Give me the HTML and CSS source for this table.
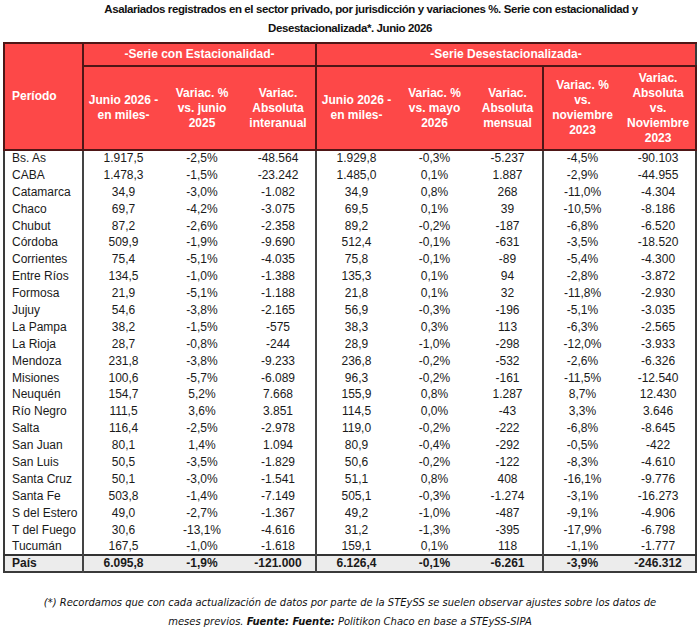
FILE: index.html
```html
<!DOCTYPE html>
<html lang="es">
<head>
  <meta charset="UTF-8">
  <meta name="viewport" content="width=device-width, initial-scale=1.0">
  <title>Asalariados registrados - Junio 2026</title>
  <link rel="stylesheet" href="styles.css">
</head>
<body>

  <!-- Titulo -->
  <div class="title">Asalariados registrados en el sector privado, por jurisdicción y variaciones %. Serie con estacionalidad y<br>Desestacionalizada*. Junio 2026</div>

  <table class="data">
    <colgroup>
      <col class="c-name">
      <col class="c-80"><col class="c-78"><col class="c-75">
      <col class="c-80"><col class="c-77"><col class="c-70">
      <col class="c-78"><col class="c-75">
    </colgroup>
    <thead>
      <tr class="group-row">
        <th rowspan="2" class="period">Período</th>
        <th colspan="3" class="split">-Serie con Estacionalidad-</th>
        <th colspan="5">-Serie Desestacionalizada-</th>
      </tr>
      <tr class="head-row">
        <th>Junio 2026 -<br>en miles-</th>
        <th>Variac. %<br>vs. junio<br>2025</th>
        <th class="split">Variac.<br>Absoluta<br>interanual</th>
        <th>Junio 2026 -<br>en miles-</th>
        <th>Variac. %<br>vs. mayo<br>2026</th>
        <th class="split">Variac.<br>Absoluta<br>mensual</th>
        <th>Variac. %<br>vs.<br>noviembre<br>2023</th>
        <th>Variac.<br>Absoluta<br>vs.<br>Noviembre<br>2023</th>
      </tr>
    </thead>
    <tbody id="rows"></tbody>
    <tfoot>
      <tr class="total">
        <td class="name">País</td>
        <td>6.095,8</td><td>-1,9%</td><td class="split">-121.000</td>
        <td>6.126,4</td><td>-0,1%</td><td class="split">-6.261</td>
        <td>-3,9%</td><td>-246.312</td>
      </tr>
    </tfoot>
  </table>

  <div class="note">(*) Recordamos que con cada actualización de datos por parte de la STEySS se suelen observar ajustes sobre los datos de<br>meses previos. <b>Fuente: Fuente:</b> Politikon Chaco en base a STEySS-SIPA</div>

  <script>
    // Datos por jurisdiccion
    const rows = [
      ['Bs. As', '1.917,5', '-2,5%', '-48.564', '1.929,8', '-0,3%', '-5.237', '-4,5%', '-90.103'],
      ['CABA', '1.478,3', '-1,5%', '-23.242', '1.485,0', '0,1%', '1.887', '-2,9%', '-44.955'],
      ['Catamarca', '34,9', '-3,0%', '-1.082', '34,9', '0,8%', '268', '-11,0%', '-4.304'],
      ['Chaco', '69,7', '-4,2%', '-3.075', '69,5', '0,1%', '39', '-10,5%', '-8.186'],
      ['Chubut', '87,2', '-2,6%', '-2.358', '89,2', '-0,2%', '-187', '-6,8%', '-6.520'],
      ['Córdoba', '509,9', '-1,9%', '-9.690', '512,4', '-0,1%', '-631', '-3,5%', '-18.520'],
      ['Corrientes', '75,4', '-5,1%', '-4.035', '75,8', '-0,1%', '-89', '-5,4%', '-4.300'],
      ['Entre Ríos', '134,5', '-1,0%', '-1.388', '135,3', '0,1%', '94', '-2,8%', '-3.872'],
      ['Formosa', '21,9', '-5,1%', '-1.188', '21,8', '0,1%', '32', '-11,8%', '-2.930'],
      ['Jujuy', '54,6', '-3,8%', '-2.165', '56,9', '-0,3%', '-196', '-5,1%', '-3.035'],
      ['La Pampa', '38,2', '-1,5%', '-575', '38,3', '0,3%', '113', '-6,3%', '-2.565'],
      ['La Rioja', '28,7', '-0,8%', '-244', '28,9', '-1,0%', '-298', '-12,0%', '-3.933'],
      ['Mendoza', '231,8', '-3,8%', '-9.233', '236,8', '-0,2%', '-532', '-2,6%', '-6.326'],
      ['Misiones', '100,6', '-5,7%', '-6.089', '96,3', '-0,2%', '-161', '-11,5%', '-12.540'],
      ['Neuquén', '154,7', '5,2%', '7.668', '155,9', '0,8%', '1.287', '8,7%', '12.430'],
      ['Río Negro', '111,5', '3,6%', '3.851', '114,5', '0,0%', '-43', '3,3%', '3.646'],
      ['Salta', '116,4', '-2,5%', '-2.978', '119,0', '-0,2%', '-222', '-6,8%', '-8.645'],
      ['San Juan', '80,1', '1,4%', '1.094', '80,9', '-0,4%', '-292', '-0,5%', '-422'],
      ['San Luis', '50,5', '-3,5%', '-1.829', '50,6', '-0,2%', '-122', '-8,3%', '-4.610'],
      ['Santa Cruz', '50,1', '-3,0%', '-1.541', '51,1', '0,8%', '408', '-16,1%', '-9.776'],
      ['Santa Fe', '503,8', '-1,4%', '-7.149', '505,1', '-0,3%', '-1.274', '-3,1%', '-16.273'],
      ['S del Estero', '49,0', '-2,7%', '-1.367', '49,2', '-1,0%', '-487', '-9,1%', '-4.906'],
      ['T del Fuego', '30,6', '-13,1%', '-4.616', '31,2', '-1,3%', '-395', '-17,9%', '-6.798'],
      ['Tucumán', '167,5', '-1,0%', '-1.618', '159,1', '0,1%', '118', '-1,1%', '-1.777']
    ];

    const body = document.getElementById('rows');
    rows.forEach(function (r) {
      const tr = document.createElement('tr');
      r.forEach(function (value, i) {
        const td = document.createElement('td');
        td.textContent = value;
        if (i === 0) td.className = 'name';
        if (i === 3 || i === 6) td.className = 'split';
        tr.appendChild(td);
      });
      body.appendChild(tr);
    });
  </script>

</body>
</html>
```

FILE: styles.css
```css
* {
  margin: 0;
  padding: 0;
  box-sizing: border-box;
}
body {
  font-family: 'Liberation Sans', Arial, sans-serif;
  background-color: #fff;
  color: #1a1a1a;
  padding: 0 3px;
}
.title {
  font-family: 'Liberation Sans', Arial, sans-serif;
  font-weight: bold;
  font-size: 11.5px;
  letter-spacing: -0.4px;
  line-height: 19px;
  text-align: center;
  text-indent: 42px;
  white-space: nowrap;
  margin-bottom: 4px;
  color: #111;
}

/* Tabla */
.data {
  width: 692px;
  table-layout: fixed;
  border-collapse: collapse;
  border: 2px solid #3a3a3a;
  font-size: 12px;
}
.c-name { width: 79px; }
.c-80 { width: 80px; }
.c-78 { width: 78px; }
.c-77 { width: 77px; }
.c-75 { width: 75px; }
.c-70 { width: 70px; }

.data th {
  background-color: #fd4848;
  color: #fff;
  font-weight: bold;
  font-size: 12px;
  line-height: 15px;
  text-align: center;
  border: 0 solid #4e1616;
}
.group-row th {
  height: 23px;
  border-top: 2px solid #4e1616;
  border-bottom: 2px solid #4e1616;
}
.head-row th {
  height: 84px;
  border-bottom: 2px solid #4e1616;
}
.data th.period {
  text-align: left;
  padding-left: 7px;
  border-right: 2px solid #4e1616;
  border-left: 2px solid #4e1616;
  border-bottom: 2px solid #4e1616;
}
.data th.split {
  border-right: 2px solid #4e1616;
}
.head-row th:last-child {
  border-right: 2px solid #4e1616;
}

.data td {
  height: 16.9px;
  line-height: 15px;
  text-align: center;
  padding: 0;
  white-space: nowrap;
}
.data td.name {
  text-align: left;
  padding-left: 7px;
  border-right: 2px solid #444;
}
.data td.split {
  border-right: 2px solid #444;
}
.total td {
  background-color: #ececec;
  font-weight: bold;
  border-top: 2px solid #333;
  height: 16px;
}

.note {
  font-family: 'DejaVu Sans Condensed', 'Liberation Sans', sans-serif;
  font-style: italic;
  font-size: 11.1px;
  line-height: 19px;
  text-align: center;
  white-space: nowrap;
  margin-top: 20px;
  color: #111;
}
```
